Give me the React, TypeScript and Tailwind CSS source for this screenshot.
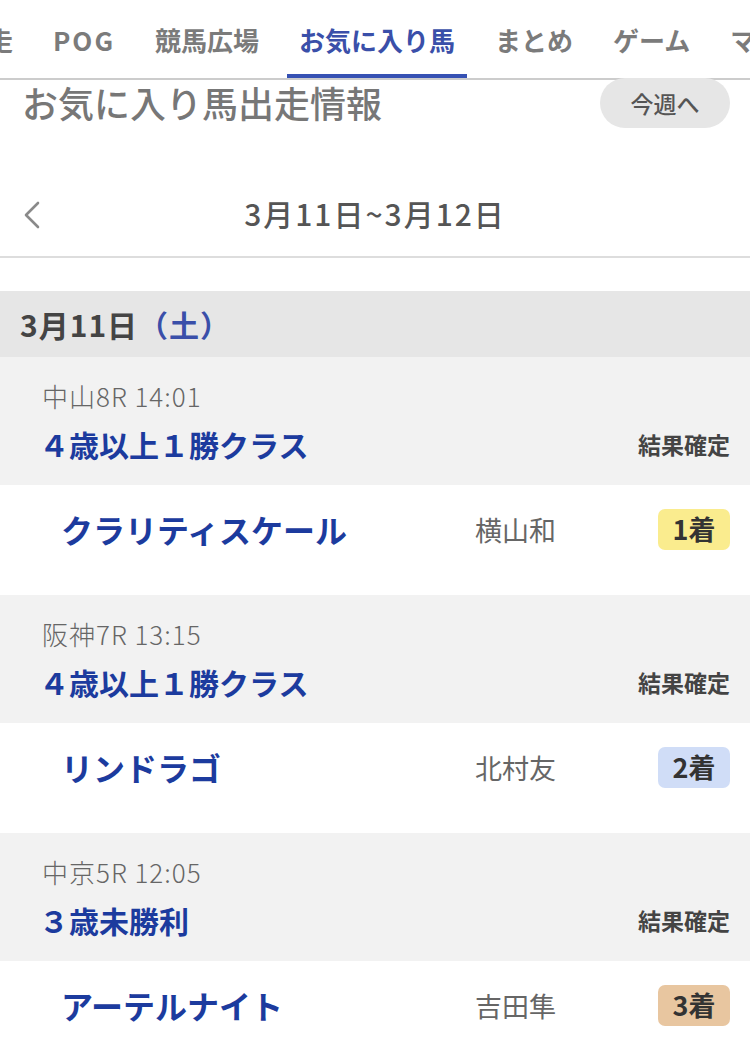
import React from "react";

const font = { fontFamily: '"Noto Sans CJK JP", "Noto Sans", sans-serif' };

const tabs = ["出走", "POG", "競馬広場", "お気に入り馬", "まとめ", "ゲーム", "マイページ"];

type Race = {
  meta: string;
  name: string;
  horse: string;
  jockey: string;
  rank: string;
  badge: string;
};

const races: Race[] = [
  {
    meta: "中山8R 14:01",
    name: "４歳以上１勝クラス",
    horse: "クラリティスケール",
    jockey: "横山和",
    rank: "1着",
    badge: "bg-[#faec8e]",
  },
  {
    meta: "阪神7R 13:15",
    name: "４歳以上１勝クラス",
    horse: "リンドラゴ",
    jockey: "北村友",
    rank: "2着",
    badge: "bg-[#d0ddf7]",
  },
  {
    meta: "中京5R 12:05",
    name: "３歳未勝利",
    horse: "アーテルナイト",
    jockey: "吉田隼",
    rank: "3着",
    badge: "bg-[#e8c6a0]",
  },
];

function TabBar() {
  return (
    <nav className="h-[80px] border-b-2 border-[#cccccc] overflow-hidden">
      <ul className="flex h-full gap-4 ml-[-51px] whitespace-nowrap">
        {tabs.map((t) => {
          const active = t === "お気に入り馬";
          return (
            <li
              key={t}
              className={
                active
                  ? "relative flex items-center px-3 text-[26px] font-bold text-[#3a4fa9]"
                  : t === "POG"
                    ? "relative flex items-center px-3 text-[26px] font-bold text-[#7b7b7b] tracking-[2px]"
                    : "relative flex items-center px-3 text-[26px] font-bold text-[#7b7b7b]"
              }
            >
              {t}
              {active && (
                <span className="absolute left-0 right-0 bottom-[-2px] h-[6px] bg-[#3651b3]" />
              )}
            </li>
          );
        })}
      </ul>
    </nav>
  );
}

function RaceBlock({ race }: { race: Race }) {
  return (
    <section>
      <div className="h-[128px] bg-[#f2f2f2] pl-[42px] pr-[20px] pt-[22px]">
        <div className="text-[26px] leading-[34px] font-light tracking-[1px] text-[#666666]">
          {race.meta}
        </div>
        <div className="flex items-center justify-between mt-[12px]">
          <span className="ml-[-3px] text-[30px] leading-[38px] font-bold text-[#1c3b9e]">
            {race.name}
          </span>
          <span className="text-[23px] font-bold text-[#444444]">結果確定</span>
        </div>
      </div>
      <div className="h-[110px] bg-white flex items-start pt-[24px] pr-[20px]">
        <span className="flex-1 pl-[61px] text-[32px] leading-[40px] font-bold text-[#1c3b9e]">
          {race.horse}
        </span>
        <span className="w-[183px] text-[27px] leading-[41px] text-[#666666]">{race.jockey}</span>
        <span
          className={`${race.badge} h-[41px] w-[72px] rounded-[7px] flex items-center justify-center text-[27px] font-bold text-[#333333]`}
        >
          {race.rank}
        </span>
      </div>
    </section>
  );
}

export default function App() {
  return (
    <div className="w-[750px] h-[1060px] overflow-hidden bg-white" style={font}>
      <TabBar />
      <div className="flex items-start justify-between pl-[22px] pr-[20px] mt-[-2px]">
        <h1 className="mt-[2px] text-[36px] leading-[44px] font-medium text-[#777777]">
          お気に入り馬出走情報
        </h1>
        <button className="h-[50px] w-[130px] rounded-full bg-[#e6e6e6] text-[23px] font-medium text-[#555555]">
          今週へ
        </button>
      </div>
      <div className="relative mt-[50px] h-[80px] flex items-center justify-center border-b-2 border-[#dddddd]">
        <svg
          className="absolute left-[22px] top-[22px]"
          width="20"
          height="30"
          viewBox="0 0 20 30"
          fill="none"
          stroke="#8a8a8a"
          strokeWidth="2.6"
          strokeLinecap="round"
          strokeLinejoin="round"
        >
          <path d="M16 3 L4 15 L16 27" />
        </svg>
        <span className="mt-[-8px] text-[30px] font-medium tracking-[2px] text-[#555555]">
          3月11日~3月12日
        </span>
      </div>
      <div className="mt-[33px] h-[66px] bg-[#e6e6e6] flex items-center pl-[20px] text-[30px] font-bold tracking-[1px] text-[#444444]">
        3月11日<span className="text-[#3a4fa9]">（土）</span>
      </div>
      {races.map((r) => (
        <RaceBlock key={r.meta} race={r} />
      ))}
    </div>
  );
}
